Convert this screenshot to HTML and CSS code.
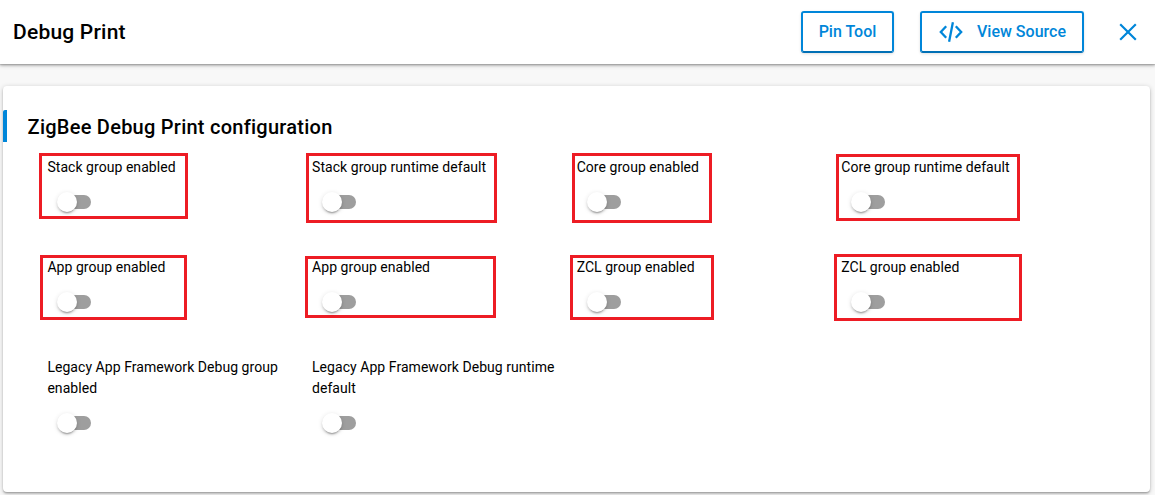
FILE: index.html
```html
<!DOCTYPE html>
<html lang="en">
<head>
<meta charset="utf-8">
<title>Debug Print</title>
<link rel="stylesheet" href="styles.css">
</head>
<body>
<header class="topbar">
  <h1 class="title">Debug Print</h1>
  <button class="btn btn-pin">Pin Tool</button>
  <button class="btn btn-source">
    <svg class="code-icon" width="24" height="22" viewBox="0 0 24 22" fill="none" stroke="currentColor" stroke-width="2.3"><path d="M7.2 5.3 1.8 11l5.4 5.7M16.8 5.3l5.4 5.7-5.4 5.7M13.9 1.2 10.1 20.8"/></svg>
    <span>View Source</span>
  </button>
  <button class="close" aria-label="Close">
    <svg width="18" height="18" viewBox="0 0 18 18" fill="none" stroke="currentColor" stroke-width="2.2"><path d="M1.2 1.2 16.8 16.8M16.8 1.2 1.2 16.8"/></svg>
  </button>
</header>
<main class="card">
  <h2 class="section-title">ZigBee Debug Print configuration</h2>
  <div class="options">
    <div class="option"><span class="label">Stack group enabled</span><span class="toggle"></span></div>
    <div class="option"><span class="label">Stack group runtime default</span><span class="toggle"></span></div>
    <div class="option"><span class="label">Core group enabled</span><span class="toggle"></span></div>
    <div class="option"><span class="label">Core group runtime default</span><span class="toggle"></span></div>
    <div class="option"><span class="label">App group enabled</span><span class="toggle"></span></div>
    <div class="option"><span class="label">App group enabled</span><span class="toggle"></span></div>
    <div class="option"><span class="label">ZCL group enabled</span><span class="toggle"></span></div>
    <div class="option"><span class="label">ZCL group enabled</span><span class="toggle"></span></div>
    <div class="option"><span class="label">Legacy App Framework Debug group enabled</span><span class="toggle"></span></div>
    <div class="option"><span class="label">Legacy App Framework Debug runtime default</span><span class="toggle"></span></div>
  </div>
  <div class="mark mark-1"></div>
  <div class="mark mark-2"></div>
  <div class="mark mark-3"></div>
  <div class="mark mark-4"></div>
  <div class="mark mark-5"></div>
  <div class="mark mark-6"></div>
  <div class="mark mark-7"></div>
  <div class="mark mark-8"></div>
</main>
</body>
</html>
```
FILE: styles.css
```css
* { box-sizing: border-box; }
body {
  margin: 0;
  height: 495px;
  overflow: hidden;
  background: #f8f8f8;
  color: #000;
  font: 14px/21px Roboto, "Liberation Sans", sans-serif;
}
.topbar {
  display: flex;
  align-items: center;
  height: 64px;
  padding: 0 18px 0 13px;
  background: #fff;
  box-shadow: 0 1px 5px rgba(0,0,0,.2), 0 2px 2px rgba(0,0,0,.14), 0 1px 1px rgba(0,0,0,.12);
}
.title, .section-title {
  margin: 0;
  font-size: 20px;
  line-height: 32px;
  font-weight: 500;
  letter-spacing: .25px;
}
.title { margin-right: auto; font-size: 21px; letter-spacing: .21px; }
.btn {
  display: flex;
  align-items: center;
  justify-content: center;
  height: 42px;
  padding: 0;
  border: 2px solid #0086d9;
  border-bottom-color: #006fb5;
  border-radius: 3px;
  background: #fff;
  color: #0086d9;
  font: 500 16px/24px Roboto, sans-serif;
  box-shadow: 0 1px 3px rgba(0,0,0,.12);
}
.btn-pin { width: 93px; margin-right: 26px; }
.btn-source { width: 164px; gap: 14px; padding-left: 1px; margin-right: 35px; }
.close { display: flex; padding: 0; border: 0; background: none; color: #0086d9; }
.card {
  position: relative;
  width: 1147px;
  height: 406px;
  margin: 22px 0 0 3px;
  padding-top: 24px;
  background: #fff;
  border-radius: 4px;
  box-shadow: 0 1px 5px rgba(0,0,0,.2), 0 2px 2px rgba(0,0,0,.14), 0 1px 1px rgba(0,0,0,.12);
}
.section-title {
  height: 32px;
  padding: 1px 0 0 20.6px;
  border-left: 4px solid #0086d9;
  border-radius: 2px 0 0 0;
}
.options {
  display: grid;
  grid-template-columns: repeat(4, 248.65px);
  column-gap: 16px;
  row-gap: 31px;
  padding: 15px 0 0 44.4px;
}
.option { display: flex; flex-direction: column; }
.label { letter-spacing: .05px; }
.toggle {
  display: flex;
  align-items: center;
  height: 48px;
  padding-left: 9.9px;
}
.toggle::before {
  content: "";
  z-index: 1;
  width: 20px;
  height: 20px;
  border-radius: 50%;
  background: #fff;
  box-shadow: 0 3px 1px -2px rgba(0,0,0,.2), 0 2px 2px rgba(0,0,0,.14), 0 1px 5px rgba(0,0,0,.12);
}
.toggle::after {
  content: "";
  width: 31px;
  height: 14px;
  margin-left: -17px;
  border-radius: 7px;
  background: #9e9e9e;
}
.mark { position: absolute; border: 3px solid #ed1c24; }
.mark-1 { left: 36px; top: 67px; width: 149px; height: 66px; }
.mark-2 { left: 303px; top: 67px; width: 191px; height: 70px; }
.mark-3 { left: 569px; top: 67px; width: 140px; height: 70px; }
.mark-4 { left: 833px; top: 68px; width: 184px; height: 67px; }
.mark-5 { left: 37px; top: 169px; width: 147px; height: 65px; }
.mark-6 { left: 302px; top: 170px; width: 191px; height: 62px; }
.mark-7 { left: 567px; top: 169px; width: 144px; height: 65px; }
.mark-8 { left: 831px; top: 168px; width: 188px; height: 67px; }
```
